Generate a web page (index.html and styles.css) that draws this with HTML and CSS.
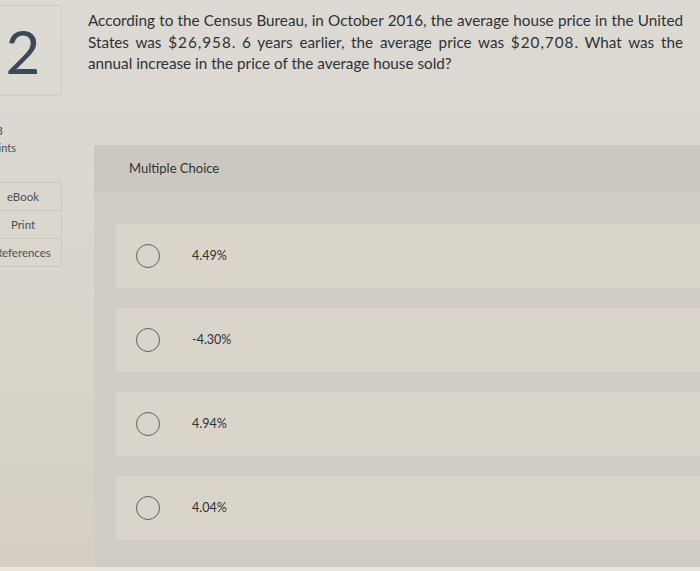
FILE: index.html
```html
<!DOCTYPE html>
<html>
<head>
<meta charset="utf-8">
<link rel="stylesheet" href="styles.css">
</head>
<body>
<div class="page">
  <aside class="side">
    <div class="qnum">2</div>
    <div class="points">
      <div class="pts-num">3</div>
      <div class="pts-label">Points</div>
    </div>
    <div class="tools">
      <div class="tool">eBook</div>
      <div class="tool">Print</div>
      <div class="tool">References</div>
    </div>
  </aside>
  <main class="main">
    <p class="question">According to the Census Bureau, in October 2016, the average house price in the United States was <span class="money">$26,958</span>. 6 years earlier, the average price was <span class="money">$20,708</span>. What was the annual increase in the price of the average house sold?</p>
    <section class="mc">
      <div class="mc-head">Multiple Choice</div>
      <div class="mc-body">
        <label class="opt"><span class="radio"></span><span class="opt-text">4.49%</span></label>
        <label class="opt"><span class="radio"></span><span class="opt-text">-4.30%</span></label>
        <label class="opt"><span class="radio"></span><span class="opt-text">4.94%</span></label>
        <label class="opt"><span class="radio"></span><span class="opt-text">4.04%</span></label>
      </div>
    </section>
  </main>
</div>
<div class="bottom-strip"></div>
</body>
</html>
```

FILE: styles.css
```css
html, body {
  margin: 0;
  padding: 0;
}
body {
  width: 700px;
  height: 571px;
  overflow: hidden;
  background: linear-gradient(180deg, #dcdad3 0%, #d9d6cd 50%, #d5cfc2 100%);
  font-family: Lato, "Open Sans", sans-serif;
  color: #2f3336;
  display: flex;
  flex-direction: column;
}
.page {
  display: flex;
  flex: 1;
  min-height: 0;
}
.side {
  width: 78px;
  margin-left: -16px;
  flex-shrink: 0;
  display: flex;
  flex-direction: column;
}
.qnum {
  margin-top: 5px;
  height: 89px;
  border: 1px solid #cfcdc6;
  border-radius: 2px;
  display: flex;
  align-items: center;
  justify-content: center;
  font-family: Lato, sans-serif;
  font-size: 60px;
  font-weight: 400;
  color: #3c4955;
}
.points {
  margin-top: 26px;
  padding-left: 2px;
  font-size: 11px;
  line-height: 17px;
  color: #4a4e52;
}
.pts-num {
  font-size: 12px;
  padding-left: 10px;
}
.tools {
  margin-top: 26px;
  border: 1px solid #cac8c1;
  display: flex;
  flex-direction: column;
}
.tool {
  height: 27px;
  display: flex;
  align-items: center;
  justify-content: center;
  font-size: 11.5px;
  color: #4d5257;
  border-top: 1px solid #cac8c1;
}
.tool:first-child {
  border-top: none;
}
.main {
  flex: 1;
  margin-left: 26px;
  display: flex;
  flex-direction: column;
  min-width: 0;
}
.question {
  margin: 10px 17px 0 0;
  font-size: 15.25px;
  line-height: 21.5px;
  text-align: justify;
  color: #2e3236;
}
.money {
  letter-spacing: 1px;
}
.mc {
  margin-top: 70px;
  margin-left: 6px;
  margin-right: -10px;
  background: #d0cdc5;
  flex: 1;
  display: flex;
  flex-direction: column;
}
.mc-head {
  height: 46px;
  padding-left: 35px;
  display: flex;
  align-items: center;
  font-size: 13px;
  color: #2f3336;
  background: #cbc8c0;
}
.mc-body {
  padding: 33px 0 0 22px;
  display: flex;
  flex-direction: column;
  gap: 20px;
}
.opt {
  height: 64px;
  background: #d9d5cb;
  display: flex;
  align-items: center;
  padding-left: 20px;
}
.radio {
  width: 22px;
  height: 22px;
  border: 1.5px solid #5e5f5f;
  border-radius: 50%;
  flex-shrink: 0;
}
.opt-text {
  margin-left: 32px;
  font-size: 12.5px;
  color: #2c3034;
}
.bottom-strip {
  height: 4px;
  background: #ebe7dd;
  flex-shrink: 0;
}
```
